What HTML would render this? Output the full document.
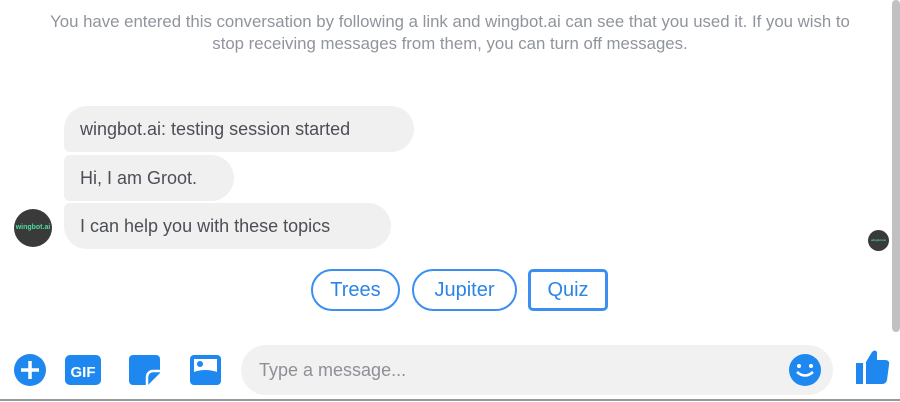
<!DOCTYPE html>
<html><head><style>
body{margin:0;width:900px;height:402px;background:#fff;position:relative;overflow:hidden;font-family:"Liberation Sans",Helvetica,sans-serif}
.notice{position:absolute;top:11px;left:0;width:900px;text-align:center;color:#90949c;font-size:16.8px;line-height:22px;white-space:nowrap}
.b{position:absolute;left:64px;background:#f1f0f0;color:#4b4f56;font-size:18px;padding:0 16px;height:46px;line-height:46px;border-radius:23px;box-sizing:border-box}
.qr{position:absolute;top:269px;height:42px;border:2px solid #3a8ff0;border-radius:21px;color:#2b85e8;font-size:20px;line-height:38px;text-align:center;box-sizing:border-box}
.av{position:absolute;border-radius:50%;background:#3a3a3a;color:#4ddba0;font-weight:bold;text-align:center}
</style></head><body>
<div class="notice">You have entered this conversation by following a link and wingbot.ai can see that you used it. If you wish to<br>stop receiving messages from them, you can turn off messages.</div>
<div class="b" style="top:106px;width:350px;border-radius:23px 23px 23px 6px">wingbot.ai: testing session started</div>
<div class="b" style="top:155px;width:170px;border-radius:6px 23px 23px 6px">Hi, I am Groot.</div>
<div class="b" style="top:203px;width:327px;border-radius:6px 23px 23px 23px">I can help you with these topics</div>
<div class="av" style="left:14px;top:209px;width:38px;height:38px;font-size:7px;line-height:38px">wingbot.ai</div>
<div class="av" style="left:868px;top:230px;width:21px;height:21px;font-size:3px;line-height:21px">wingbot.ai</div>
<div class="qr" style="left:311px;width:89px">Trees</div>
<div class="qr" style="left:412px;width:105px">Jupiter</div>
<div class="qr" style="left:528px;width:80px;border-radius:5px;border-width:3px;line-height:36px">Quiz</div>
<div style="position:absolute;left:892px;top:0;width:8px;height:332px;background:#c1c1c1;border-radius:4px"></div>
<div style="position:absolute;left:241px;top:345px;width:592px;height:50px;background:#f1f1f1;border-radius:25px;color:#8d9096;font-size:18px;line-height:50px;padding-left:18px;box-sizing:border-box">Type a message...</div>
<svg style="position:absolute;left:0;top:340px" width="900" height="62">
<circle cx="30" cy="30" r="16" fill="#1e88f0"/><path d="M30 21v18M21 30h18" stroke="#fff" stroke-width="3.5"/>
<rect x="65" y="15" width="36" height="30" rx="5" fill="#1e88f0"/><text x="83" y="37" font-family="Liberation Sans" font-weight="bold" font-size="15" fill="#fff" text-anchor="middle">GIF</text>
<path d="M133 15h23a4 4 0 0 1 4 4v14l-12 12h-15a4 4 0 0 1-4-4v-22a4 4 0 0 1 4-4z" fill="#1e88f0"/><path d="M160 31h-7a6 6 0 0 0-6 6v8" stroke="#fff" stroke-width="2.5" fill="none"/>
<rect x="190" y="15" width="31" height="30" rx="4" fill="#1e88f0"/><rect x="194" y="19" width="23" height="17" fill="#fff"/><circle cx="200" cy="24" r="3" fill="#1e88f0"/><path d="M194 36v-4q11 -4 23 0v4z" fill="#1e88f0"/>
<circle cx="805" cy="30" r="16" fill="#1e88f0"/><circle cx="799" cy="26" r="2" fill="#fff"/><circle cx="811" cy="26" r="2" fill="#fff"/><path d="M797 32q8 7 16 0" stroke="#fff" stroke-width="2.5" fill="none"/>
<path d="M856 23h7v21h-7z M866 22l6-10q3-3 5 0l0 8h8q5 0 4 5l-2 15q-1 4-5 4h-16z" fill="#1e88f0"/>
<rect x="0" y="59" width="900" height="2" fill="#999"/>
</svg>
</body></html>
